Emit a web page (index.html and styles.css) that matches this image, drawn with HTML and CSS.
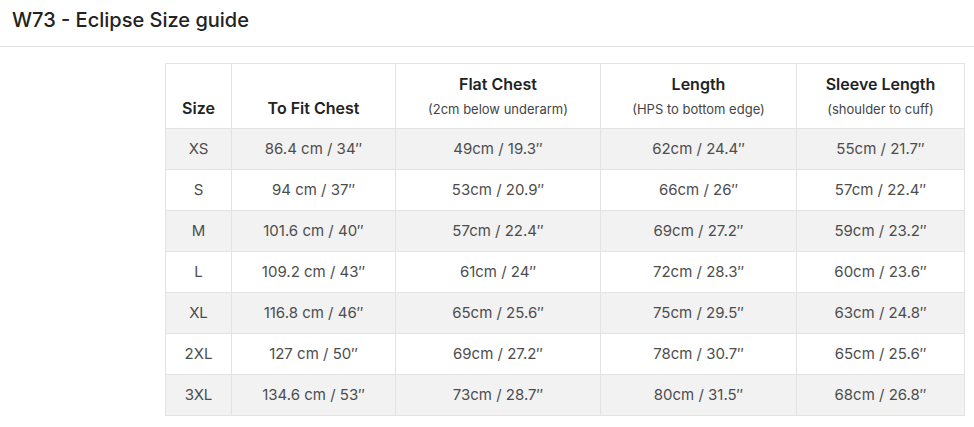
FILE: index.html
```html
<!DOCTYPE html>
<html lang="en">
<head>
<meta charset="utf-8">
<title>W73 - Eclipse Size guide</title>
<link rel="stylesheet" href="styles.css">
</head>
<body>
<header class="head">
  <h1 class="title">W73 - Eclipse Size guide</h1>
</header>
<main class="content">
  <table class="sizes">
    <colgroup>
      <col class="c-size">
      <col class="c-chest">
      <col class="c-flat">
      <col class="c-length">
      <col class="c-sleeve">
    </colgroup>
    <thead>
      <tr>
        <th>Size</th>
        <th>To Fit Chest</th>
        <th>Flat Chest<span class="sub">(2cm below underarm)</span></th>
        <th>Length<span class="sub">(HPS to bottom edge)</span></th>
        <th>Sleeve Length<span class="sub">(shoulder to cuff)</span></th>
      </tr>
    </thead>
    <tbody>
      <tr><td>XS</td><td>86.4 cm / 34″</td><td>49cm / 19.3″</td><td>62cm / 24.4″</td><td>55cm / 21.7″</td></tr>
      <tr><td>S</td><td>94 cm / 37″</td><td>53cm / 20.9″</td><td>66cm / 26″</td><td>57cm / 22.4″</td></tr>
      <tr><td>M</td><td>101.6 cm / 40″</td><td>57cm / 22.4″</td><td>69cm / 27.2″</td><td>59cm / 23.2″</td></tr>
      <tr><td>L</td><td>109.2 cm / 43″</td><td>61cm / 24″</td><td>72cm / 28.3″</td><td>60cm / 23.6″</td></tr>
      <tr><td>XL</td><td>116.8 cm / 46″</td><td>65cm / 25.6″</td><td>75cm / 29.5″</td><td>63cm / 24.8″</td></tr>
      <tr><td>2XL</td><td>127 cm / 50″</td><td>69cm / 27.2″</td><td>78cm / 30.7″</td><td>65cm / 25.6″</td></tr>
      <tr><td>3XL</td><td>134.6 cm / 53″</td><td>73cm / 28.7″</td><td>80cm / 31.5″</td><td>68cm / 26.8″</td></tr>
    </tbody>
  </table>
</main>
</body>
</html>
```

FILE: styles.css
```css
html, body {
  margin: 0;
  padding: 0;
  background: #ffffff;
  font-family: Inter, "Noto Sans", "Liberation Sans", sans-serif;
  color: #333333;
}

.head {
  height: 47px;
  border-bottom: 1px solid #e3e4e6;
  box-sizing: border-box;
  padding: 0 12px 6px;
  display: flex;
  align-items: center;
}

.title {
  margin: 0;
  font-size: 20px;
  font-weight: 500;
  color: #222222;
  line-height: 24px;
}

.content {
  padding: 16px 0 0 165px;
}

.sizes {
  border-collapse: collapse;
  table-layout: fixed;
  width: 799px;
  font-size: 15px;
}

.c-size { width: 66px; }
.c-chest { width: 164px; }
.c-flat { width: 205px; }
.c-length { width: 196px; }
.c-sleeve { width: 168px; }

.sizes th,
.sizes td {
  border: 1px solid #e2e3e5;
  text-align: center;
  padding: 0 4px;
}

.sizes th {
  height: 54px;
  vertical-align: bottom;
  padding-bottom: 10px;
  font-size: 16px;
  font-weight: 600;
  color: #222222;
  line-height: 20px;
}

.sub {
  display: block;
  margin-top: 6px;
  font-size: 13px;
  font-weight: 400;
  line-height: 18px;
  color: #444444;
}

.sizes td {
  height: 40px;
  line-height: 20px;
  color: #4d4d4d;
  vertical-align: middle;
}

.sizes tbody tr:nth-child(odd) td {
  background: #f2f2f2;
}
```
